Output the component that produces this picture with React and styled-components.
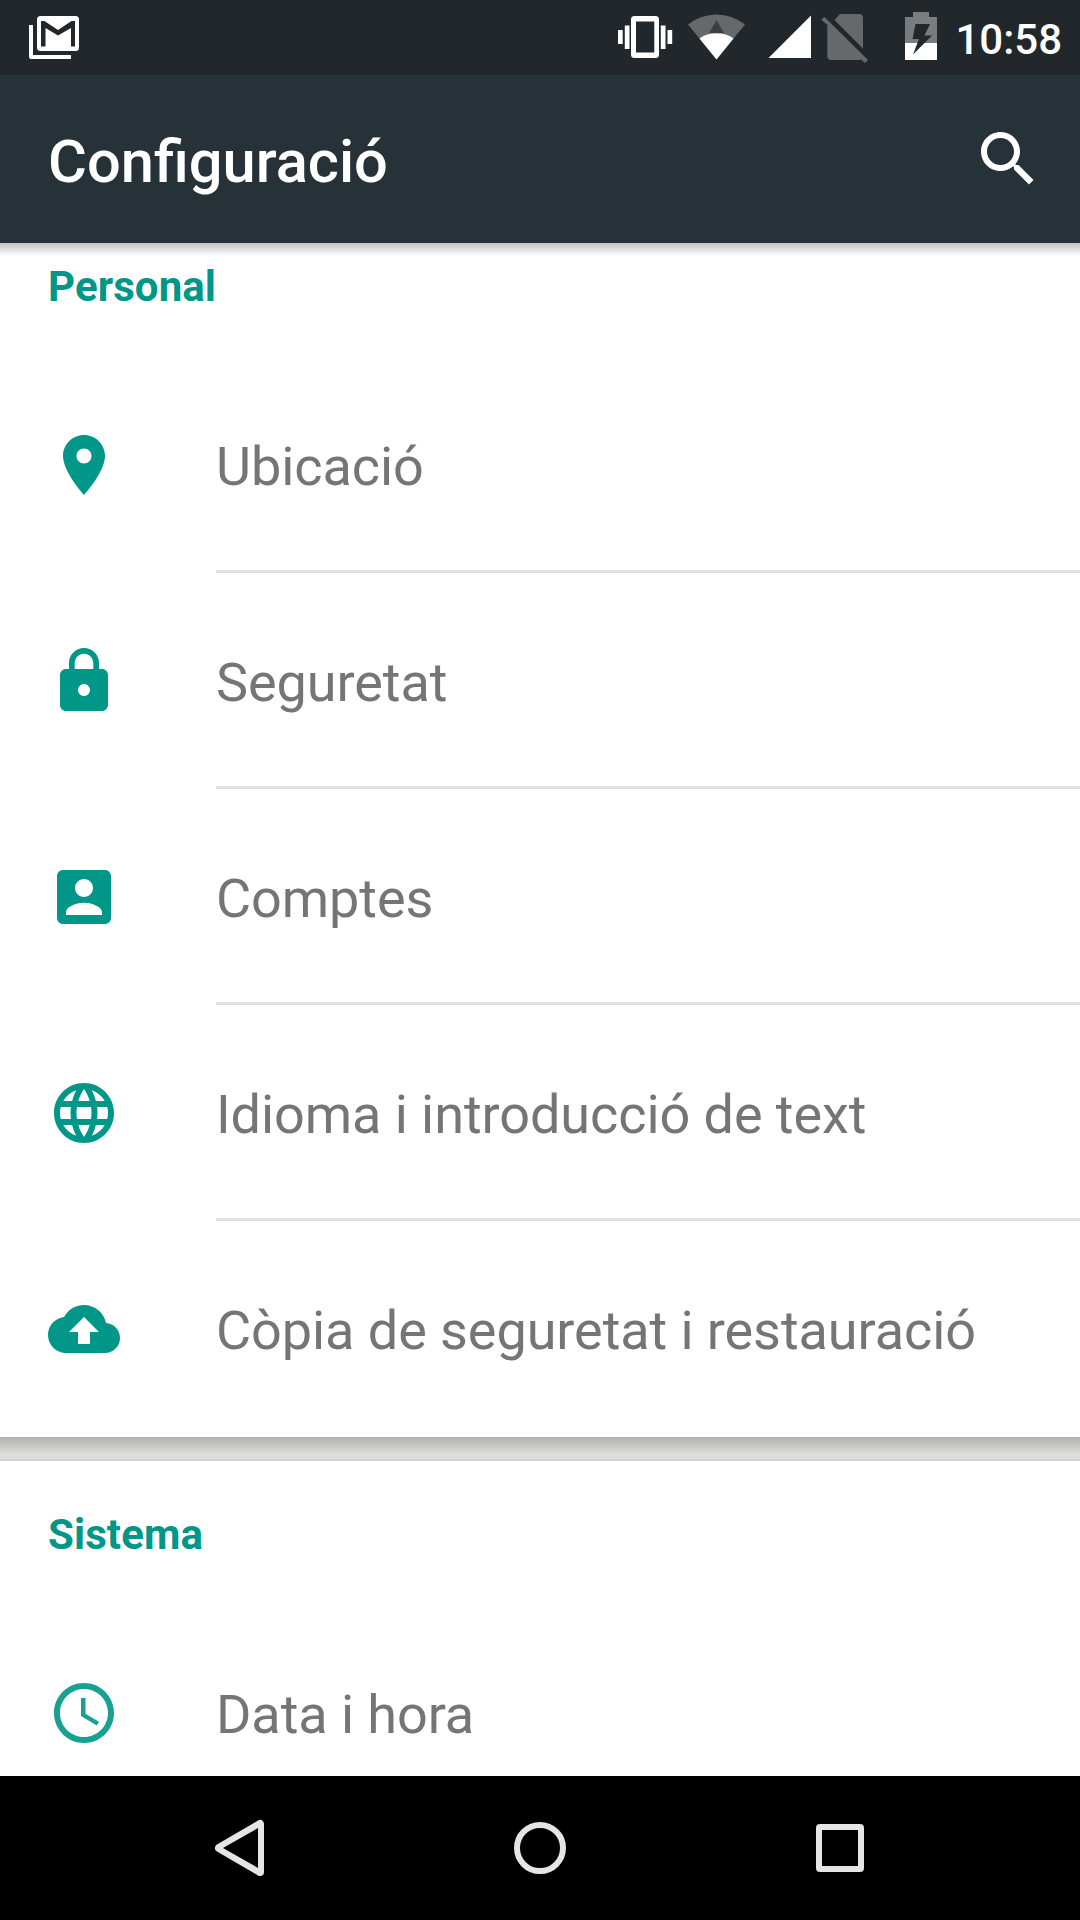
import React from "react";
import styled, { createGlobalStyle } from "styled-components";

const GlobalStyle = createGlobalStyle`
  * {
    box-sizing: border-box;
  }
  body {
    margin: 0;
    font-family: Roboto, "Noto Sans", sans-serif;
    background: #fff;
  }
  svg {
    display: block;
    flex-shrink: 0;
  }
`;

const Screen = styled.div`
  display: flex;
  flex-direction: column;
  width: 1080px;
  height: 1920px;
  overflow: hidden;
`;

const StatusBar = styled.div`
  display: flex;
  align-items: center;
  justify-content: space-between;
  height: 75px;
  padding: 0 18px 0 27px;
  background: #21272b;
  flex-shrink: 0;
`;

const StatusIcons = styled.div`
  display: flex;
  align-items: center;
`;

const Clock = styled.div`
  padding-top: 3px;
  margin-left: 11px;
  color: #fff;
  font-size: 42px;
  font-weight: 500;
  line-height: 49px;
`;

const Toolbar = styled.header`
  position: relative;
  display: flex;
  align-items: center;
  justify-content: space-between;
  height: 168px;
  padding: 0 36px 0 48px;
  background: #263238;
  flex-shrink: 0;

  /* shadow over the list */
  &::after {
    content: "";
    position: absolute;
    top: 100%;
    left: 0;
    width: 100%;
    height: 14px;
    background: linear-gradient(
      rgba(0, 0, 0, 0.24),
      rgba(0, 0, 0, 0.14) 40%,
      rgba(0, 0, 0, 0.04) 75%,
      transparent
    );
  }
`;

const Title = styled.h1`
  margin: 0;
  padding-top: 5px;
  color: #fff;
  font-size: 60px;
  font-weight: 500;
  line-height: 70px;
  /* letter-spacing would drop the fi ligature, so the size is trimmed instead */
  font-size: 59.6px;
`;

/* the list is scrolled a little under the toolbar */
const Content = styled.main`
  flex: 1;
  min-height: 0;
  overflow: hidden;
`;

const Card = styled.section`
  background: #fff;
  margin-top: ${({ $scrolled }) => ($scrolled ? "-30px" : "0")};
`;

const Gap = styled.div`
  height: 24px;
  background: linear-gradient(
    #b1b1af,
    #c0c0be 25%,
    #d4d4d2 55%,
    #dfdfdd 75%,
    #dcdcda 88%,
    #cdcdcb
  );
`;

const CardTitle = styled.h2`
  display: flex;
  align-items: center;
  height: 144px;
  margin: 0;
  padding: 2px 48px 0;
  color: #009688;
  font-size: 42px;
  font-weight: 700;
  letter-spacing: 0.1px;
`;

const Row = styled.div`
  display: flex;
  height: 216px;
  padding-left: 48px;
  align-items: center;
`;

const RowIcon = styled.svg`
  width: 72px;
  height: 72px;
  margin-right: 96px;
  fill: #009688;
  opacity: ${({ $light }) => ($light ? 0.9 : 1)};
`;

const RowText = styled.div`
  display: flex;
  align-items: center;
  flex: 1;
  height: 100%;
  padding-top: ${({ $divider }) => ($divider ? "6px" : "3px")};
  border-bottom: ${({ $divider }) => ($divider ? "3px solid #e0e0e0" : "none")};
  color: #757575;
  font-size: 54px;
  letter-spacing: -0.07px;
  white-space: nowrap;
`;

const NavBar = styled.nav`
  display: flex;
  align-items: center;
  height: 144px;
  padding: 0 90px;
  background: #000;
  flex-shrink: 0;
`;

const NavButton = styled.div`
  display: flex;
  justify-content: center;
  flex: 1;
`;

const icons = {
  place:
    "M12 2C8.13 2 5 5.13 5 9c0 5.25 7 13 7 13s7-7.75 7-13c0-3.87-3.13-7-7-7zm0 9.5c-1.38 0-2.5-1.12-2.5-2.5s1.12-2.5 2.5-2.5 2.5 1.12 2.5 2.5-1.12 2.5-2.5 2.5z",
  lock: "M18 8h-1V6c0-2.76-2.24-5-5-5S7 3.24 7 6v2H6c-1.1 0-2 .9-2 2v10c0 1.1.9 2 2 2h12c1.1 0 2-.9 2-2V10c0-1.1-.9-2-2-2zm-6 9c-1.1 0-2-.9-2-2s.9-2 2-2 2 .9 2 2-.9 2-2 2zm3.1-9H8.9V6c0-1.71 1.39-3.1 3.1-3.1 1.71 0 3.1 1.39 3.1 3.1v2z",
  account:
    "M3 5v14c0 1.1.89 2 2 2h14c1.1 0 2-.9 2-2V5c0-1.1-.9-2-2-2H5c-1.11 0-2 .9-2 2zm12 4c0 1.66-1.34 3-3 3s-3-1.34-3-3 1.34-3 3-3 3 1.34 3 3zm-9 8c0-2 4-3.1 6-3.1s6 1.1 6 3.1v1H6v-1z",
  language:
    "M11.99 2C6.47 2 2 6.48 2 12s4.47 10 9.99 10C17.52 22 22 17.52 22 12S17.52 2 11.99 2zm6.93 6h-2.95c-.32-1.25-.78-2.45-1.38-3.56 1.84.63 3.37 1.91 4.33 3.56zM12 4.04c.83 1.2 1.48 2.53 1.91 3.96h-3.82c.43-1.43 1.08-2.76 1.91-3.96zM4.26 14C4.1 13.36 4 12.69 4 12s.1-1.36.26-2h3.38c-.08.66-.14 1.32-.14 2 0 .68.06 1.34.14 2H4.26zm.82 2h2.95c.32 1.25.78 2.45 1.38 3.56-1.84-.63-3.37-1.9-4.33-3.56zm2.95-8H5.08c.96-1.66 2.49-2.93 4.33-3.56C8.81 5.55 8.35 6.75 8.03 8zM12 19.96c-.83-1.2-1.48-2.53-1.91-3.96h3.82c-.43 1.43-1.08 2.76-1.91 3.96zM14.34 14H9.66c-.09-.66-.16-1.32-.16-2 0-.68.07-1.35.16-2h4.68c.09.65.16 1.32.16 2 0 .68-.07 1.34-.16 2zm.25 5.56c.6-1.11 1.06-2.31 1.38-3.56h2.95c-.96 1.65-2.49 2.93-4.33 3.56zM16.36 14c.08-.66.14-1.32.14-2 0-.68-.06-1.34-.14-2h3.38c.16.64.26 1.31.26 2s-.1 1.36-.26 2h-3.38z",
  backup:
    "M19.35 10.04C18.67 6.59 15.64 4 12 4 9.11 4 6.6 5.64 5.35 8.04 2.34 8.36 0 10.91 0 14c0 3.31 2.69 6 6 6h13c2.76 0 5-2.24 5-5 0-2.64-2.05-4.78-4.65-4.96zM14 13v4h-4v-4H7l5-5 5 5h-3z",
  time: "M11.99 2C6.47 2 2 6.48 2 12s4.47 10 9.99 10C17.52 22 22 17.52 22 12S17.52 2 11.99 2zM12 20c-4.42 0-8-3.58-8-8s3.58-8 8-8 8 3.58 8 8-3.58 8-8 8zm.5-13H11v6l5.25 3.15.75-1.23-4.5-2.67z",
};

const personal = [
  { icon: "place", text: "Ubicació" },
  { icon: "lock", text: "Seguretat" },
  { icon: "account", text: "Comptes" },
  { icon: "language", text: "Idioma i introducció de text" },
  { icon: "backup", text: "Còpia de seguretat i restauració" },
];

const GmailIcon = () => (
  <svg width="54" height="75" viewBox="27 0 54 75">
    <path d="M31 25v32h40" fill="none" stroke="#fff" strokeWidth="4" strokeLinejoin="round" />
    <rect x="37" y="16" width="42" height="35" rx="3.5" fill="#fff" />
    <path
      d="M41 46.5V21h3.500L58 30l13.500-9H75v25.500h-4V28L58 35.500 45.500 28v18.500z"
      fill="#21272b"
    />
  </svg>
);

const VibrateIcon = () => (
  <svg width="72" height="75" viewBox="609 0 72 75" fill="#fff">
    <rect x="618" y="30" width="4.700" height="14" />
    <rect x="624.800" y="25.500" width="4.700" height="23.500" />
    <path
      fillRule="evenodd"
      d="M634.500 16h21a3.500 3.500 0 0 1 3.500 3.500v35a3.500 3.500 0 0 1-3.500 3.500h-21a3.500 3.500 0 0 1-3.500-3.500v-35a3.500 3.500 0 0 1 3.500-3.500zM636 21.500v31h18.300v-31z"
    />
    <rect x="660.800" y="25.500" width="4.700" height="23.500" />
    <rect x="667.500" y="30" width="4.700" height="14" />
  </svg>
);

const WifiIcon = () => (
  <svg width="72" height="75" viewBox="681 0 72 75">
    <path d="M716.500 59.500L688 24.500Q701 14.500 716.500 14.500T745 24.500z" fill="#66696c" />
    <path d="M716.500 59.500L699.500 38.500Q707 33 716.500 33T733.500 38.500z" fill="#fff" />
    <path d="M716.500 20l7.500 13.200h-15z" fill="#3b3e40" />
  </svg>
);

const SignalIcon = () => (
  <svg width="62" height="75" viewBox="753 0 62 75">
    <path d="M768.500 58L811 15.500V58z" fill="#fff" />
  </svg>
);

const NoSimIcon = () => (
  <svg width="72" height="75" viewBox="815 0 72 75" fill="#66696c">
    <path d="M840 14h19q4 0 4 4v30.500L834.500 20z" />
    <path d="M827.300 25L821.300 19.800l3-3L868 60l-3 3-4-3.500-1.500.5h-28.200q-4 0-4-4z" />
  </svg>
);

const BatteryIcon = () => (
  <svg width="57" height="75" viewBox="887 0 57 75">
    <path d="M905 17h8v-5h16v5h8v26h-32z" fill="#7a7d80" />
    <path d="M905 43h32v17h-32z" fill="#fff" />
    <path d="M915.500 24H930l-5.500 11.500h7.500L913 54.500l6-15.500h-6.500z" fill="#21272b" />
  </svg>
);

const SearchIcon = () => (
  <svg width="72" height="72" viewBox="0 0 24 24" fill="#fff">
    <path d="M15.500 14h-.79l-.28-.27C15.410 12.590 16 11.110 16 9.500 16 5.910 13.090 3 9.500 3S3 5.910 3 9.500 5.910 16 9.500 16c1.610 0 3.090-.59 4.230-1.570l.27.28v.79l5 4.990L20.490 19l-4.990-5zm-6 0C7.010 14 5 11.990 5 9.500S7.010 5 9.500 5 14 7.010 14 9.500 11.990 14 9.500 14z" />
  </svg>
);

const ListRow = ({ icon, text, divider, light }) => (
  <Row>
    <RowIcon viewBox="0 0 24 24" $light={light}>
      <path d={icons[icon]} />
    </RowIcon>
    <RowText $divider={divider}>{text}</RowText>
  </Row>
);

const App = () => {
  return (
    <Screen>
      <GlobalStyle />
      <StatusBar>
        <GmailIcon />
        <StatusIcons>
          <VibrateIcon />
          <WifiIcon />
          <SignalIcon />
          <NoSimIcon />
          <BatteryIcon />
          <Clock>10:58</Clock>
        </StatusIcons>
      </StatusBar>
      <Toolbar>
        <Title>Configuració</Title>
        <SearchIcon />
      </Toolbar>
      <Content>
        <Card $scrolled>
          <CardTitle>Personal</CardTitle>
          {personal.map((item, i) => (
            <ListRow key={item.icon} {...item} divider={i < personal.length - 1} />
          ))}
        </Card>
        <Gap />
        <Card>
          <CardTitle>Sistema</CardTitle>
          <ListRow icon="time" text="Data i hora" light />
        </Card>
      </Content>
      <NavBar>
        <NavButton>
          <svg width="72" height="72" viewBox="204 1812 72 72">
            <path
              d="M219 1848l41-24v48z"
              fill="#e5e5e5"
              stroke="#e5e5e5"
              strokeWidth="8"
              strokeLinejoin="round"
            />
            <path d="M223 1848l35-20v40z" fill="#000" />
          </svg>
        </NavButton>
        <NavButton>
          <svg width="72" height="72" viewBox="0 0 72 72">
            <circle cx="36" cy="36" r="23" fill="none" stroke="#e5e5e5" strokeWidth="6" />
          </svg>
        </NavButton>
        <NavButton>
          <svg width="72" height="72" viewBox="0 0 72 72">
            <rect x="12" y="12" width="48" height="48" rx="4" fill="#e5e5e5" />
            <rect x="18" y="18" width="36" height="36" fill="#000" />
          </svg>
        </NavButton>
      </NavBar>
    </Screen>
  );
};

export default App;
